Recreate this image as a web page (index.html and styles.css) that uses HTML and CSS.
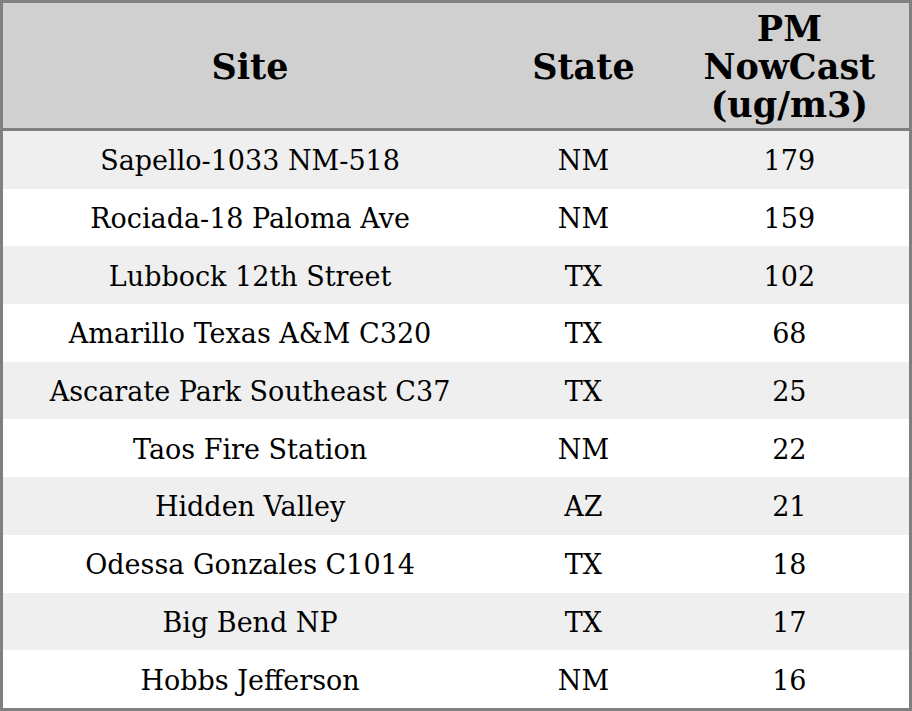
FILE: index.html
```html
<!DOCTYPE html>
<html>
<head>
<meta charset="utf-8">
<link rel="stylesheet" href="styles.css">
</head>
<body>
<table class="data">
  <colgroup>
    <col class="c-site">
    <col class="c-state">
    <col class="c-pm">
  </colgroup>
  <thead>
    <tr>
      <th>Site</th>
      <th>State</th>
      <th>PM<br>NowCast<br>(ug/m3)</th>
    </tr>
  </thead>
  <tbody>
    <tr><td>Sapello-1033 NM-518</td><td>NM</td><td>179</td></tr>
    <tr><td>Rociada-18 Paloma Ave</td><td>NM</td><td>159</td></tr>
    <tr><td>Lubbock 12th Street</td><td>TX</td><td>102</td></tr>
    <tr><td>Amarillo Texas A&amp;M C320</td><td>TX</td><td>68</td></tr>
    <tr><td>Ascarate Park Southeast C37</td><td>TX</td><td>25</td></tr>
    <tr><td>Taos Fire Station</td><td>NM</td><td>22</td></tr>
    <tr><td>Hidden Valley</td><td>AZ</td><td>21</td></tr>
    <tr><td>Odessa Gonzales C1014</td><td>TX</td><td>18</td></tr>
    <tr><td>Big Bend NP</td><td>TX</td><td>17</td></tr>
    <tr><td>Hobbs Jefferson</td><td>NM</td><td>16</td></tr>
  </tbody>
</table>
</body>
</html>
```
FILE: styles.css
```css
html, body {
  margin: 0;
  padding: 0;
  background: #ffffff;
}
.data {
  width: 912px;
  border-collapse: collapse;
  border: 3px solid #808080;
  font-family: "DejaVu Serif", serif;
  color: #000;
  table-layout: fixed;
}
.c-site { width: 494px; }
.c-state { width: 172px; }
.c-pm { width: 240px; }
.data th {
  background: #d0d0d0;
  font-size: 35px;
  font-weight: bold;
  line-height: 38px;
  height: 123px;
  padding: 2px 0 0;
  text-align: center;
  vertical-align: middle;
  border-bottom: 3px solid #808080;
}
.data td {
  font-size: 27px;
  height: 55.7px;
  padding: 2px 0 0;
  text-align: center;
  vertical-align: middle;
}
.data tbody tr:nth-child(odd) td {
  background: #efefef;
}
```
